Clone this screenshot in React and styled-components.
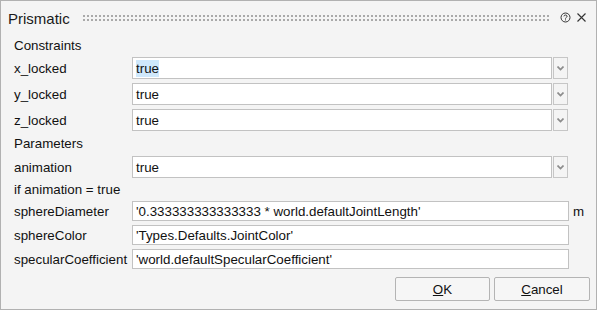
import React from "react";
import styled, { createGlobalStyle } from "styled-components";

const Global = createGlobalStyle`
  html, body { margin: 0; padding: 0; background: #f4f4f4; }
  * { box-sizing: border-box; }
`;

const Window = styled.div`
  width: 597px;
  height: 310px;
  border: 1px solid #b1b1b1;
  background: #f4f4f4;
  font-family: "Liberation Sans", Arial, sans-serif;
  font-size: 13.33px;
  color: #111;
  display: flex;
  flex-direction: column;
`;

const TitleBar = styled.div`
  height: 33px;
  display: flex;
  align-items: center;
  padding-left: 7px;
  padding-right: 9px;
`;

const Title = styled.div`
  font-size: 15px;
  color: #1a1a1a;
  margin-top: 1px;
`;

const Grip = styled.svg`
  flex: 1;
  height: 8px;
  margin-left: 13px;
  margin-right: 6px;
  margin-top: 2px;
`;

const IconBtn = styled.svg`
  width: 11px;
  height: 11px;
  margin-left: 5px;
`;

const Body = styled.div`
  display: flex;
  flex-direction: column;
  padding: 0 0 0 13px;
  flex: 1;
`;

const Section = styled.div`
  height: ${(p) => p.$h}px;
  display: flex;
  align-items: center;
  padding-left: 0;
`;

const Row = styled.div`
  height: ${(p) => p.$h}px;
  margin-bottom: ${(p) => p.$mb || 0}px;
  display: flex;
  align-items: center;
`;

const Label = styled.div`
  width: 118px;
  white-space: nowrap;
`;

const Field = styled.div`
  height: 100%;
  width: ${(p) => p.$w}px;
  border: 1px solid #c2c2c2;
  background: #fff;
  display: flex;
  align-items: center;
  padding-left: 3px;
  white-space: nowrap;
  overflow: hidden;
`;

const Selected = styled.span`
  background: #cfe8fb;
  padding: 1px 0;
`;

const DropBtn = styled.div`
  height: 100%;
  width: 15px;
  margin-left: 1px;
  border: 1px solid #c6c6c6;
  display: flex;
  align-items: center;
  justify-content: center;
`;

const Unit = styled.div`
  margin-left: 4px;
`;

const Footer = styled.div`
  display: flex;
  justify-content: flex-end;
  gap: 4px;
  margin-top: 8px;
  padding-right: 6px;
`;

const Button = styled.button`
  width: ${(p) => p.$w}px;
  height: 24px;
  border: 1px solid #b4b4b4;
  border-radius: 2px;
  background: #f6f6f6;
  font-family: "Liberation Sans", Arial, sans-serif;
  font-size: 13.33px;
  color: #111;
  padding: 0;
  u { text-decoration: underline; }
`;

const Arrow = () => (
  <svg width="7" height="5" viewBox="0 0 7 5">
    <path d="M0.5 0.5 L3.5 3.5 L6.5 0.5" fill="none" stroke="#8c8c8c" strokeWidth="1.7" />
  </svg>
);

const SelectRow = ({ label, value, selected }) => (
  <Row $h={22} $mb={4}>
    <Label>{label}</Label>
    <Field $w={420}>{selected ? <Selected>{value}</Selected> : value}</Field>
    <DropBtn>
      <Arrow />
    </DropBtn>
  </Row>
);

const TextRow = ({ label, value, unit, mb }) => (
  <Row $h={20} $mb={mb}>
    <Label>{label}</Label>
    <Field $w={437}>{value}</Field>
    {unit && <Unit>{unit}</Unit>}
  </Row>
);

export default function App() {
  return (
    <>
      <Global />
      <Window>
        <TitleBar>
          <Title>Prismatic</Title>
          <Grip>
            <defs>
              <pattern id="dots" width="4" height="4" patternUnits="userSpaceOnUse">
                <rect x="0" y="0" width="2" height="2" fill="#a9a9a9" />
              </pattern>
            </defs>
            <rect x="0" y="0" width="100%" height="6" fill="url(#dots)" />
          </Grip>
          <IconBtn viewBox="0 0 11 11">
            <circle cx="5.5" cy="5.5" r="4.5" fill="none" stroke="#333" strokeWidth="1" />
            <path d="M3.9 4.3 C3.9 2.6 7.1 2.6 7.1 4.3 C7.1 5.3 5.5 5.4 5.5 6.6" fill="none" stroke="#333" strokeWidth="1" />
            <rect x="5" y="7.4" width="1" height="1" fill="#333" />
          </IconBtn>
          <IconBtn viewBox="0 0 11 11">
            <path d="M1.5 1.5 L9.5 9.5 M9.5 1.5 L1.5 9.5" stroke="#333" strokeWidth="1.1" />
          </IconBtn>
        </TitleBar>
        <Body>
          <Section $h={23}>Constraints</Section>
          <SelectRow label="x_locked" value="true" selected />
          <SelectRow label="y_locked" value="true" />
          <Row $h={22}>
            <Label>z_locked</Label>
            <Field $w={420}>true</Field>
            <DropBtn>
              <Arrow />
            </DropBtn>
          </Row>
          <Section $h={25}>Parameters</Section>
          <Row $h={22}>
            <Label>animation</Label>
            <Field $w={420}>true</Field>
            <DropBtn>
              <Arrow />
            </DropBtn>
          </Row>
          <Section $h={23}>if animation = true</Section>
          <TextRow
            label="sphereDiameter"
            value="'0.333333333333333 * world.defaultJointLength'"
            unit="m"
            mb={4}
          />
          <TextRow label="sphereColor" value="'Types.Defaults.JointColor'" mb={4} />
          <TextRow label="specularCoefficient" value="'world.defaultSpecularCoefficient'" />
          <Footer>
            <Button $w={95}>
              <u>O</u>K
            </Button>
            <Button $w={96}>
              <u>C</u>ancel
            </Button>
          </Footer>
        </Body>
      </Window>
    </>
  );
}
